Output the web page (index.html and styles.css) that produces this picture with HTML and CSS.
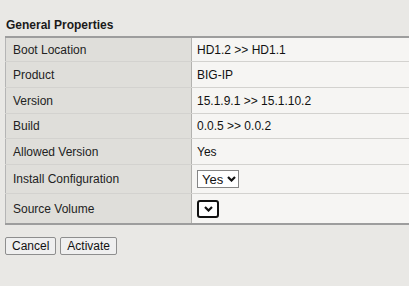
FILE: index.html
```html
<!DOCTYPE html>
<html>
<head>
<meta charset="utf-8">
<link rel="stylesheet" href="styles.css">
</head>
<body>
<div class="page">
  <h2 class="title">General Properties</h2>
  <table class="props">
    <tr class="r first"><td class="lbl">Boot Location</td><td class="val">HD1.2 &gt;&gt; HD1.1</td></tr>
    <tr class="r"><td class="lbl">Product</td><td class="val">BIG-IP</td></tr>
    <tr class="r"><td class="lbl">Version</td><td class="val">15.1.9.1 &gt;&gt; 15.1.10.2</td></tr>
    <tr class="r short"><td class="lbl">Build</td><td class="val">0.0.5 &gt;&gt; 0.0.2</td></tr>
    <tr class="r"><td class="lbl">Allowed Version</td><td class="val">Yes</td></tr>
    <tr class="r tall"><td class="lbl">Install Configuration</td><td class="val"><span class="sel">Yes<svg class="chev" width="9" height="6" viewBox="0 0 9 6"><path d="M1 1 L4.5 4.5 L8 1" fill="none" stroke="#111" stroke-width="2.2"/></svg></span></td></tr>
    <tr class="r tall last"><td class="lbl">Source Volume</td><td class="val"><span class="sel empty"><svg class="chev" width="9" height="6" viewBox="0 0 9 6"><path d="M1 1 L4.5 4.5 L8 1" fill="none" stroke="#111" stroke-width="2.2"/></svg></span></td></tr>
  </table>
  <div class="actions">
    <button class="btn">Cancel</button>
    <button class="btn">Activate</button>
  </div>
</div>
</body>
</html>
```
FILE: styles.css
```css
html, body {
  margin: 0;
  padding: 0;
  overflow: hidden;
  background: #e9e8e5;
}
.page {
  padding: 0 0 0 5px;
  font-family: "Liberation Sans", Arial, sans-serif;
  font-size: 12px;
  color: #1a1a1a;
}
.title {
  font-size: 12px;
  font-weight: bold;
  margin: 0;
  padding: 18px 0 4px 1px;
  line-height: 14px;
}
.props {
  border-collapse: collapse;
  width: 410px;
  border-top: 2px solid #9d9d9d;
  border-left: 1px solid #b5b5b5;
  border-bottom: 2px solid #9d9d9d;
}
.props td {
  border-bottom: 1px solid #d3d2cf;
  padding: 0;
  height: 25px;
  vertical-align: middle;
}
.props .first td { height: 23px; }
.props .short td { height: 24px; }
.props .tall td { height: 28px; }
.props .last td { height: 29px; border-bottom: none; }
.lbl {
  background: #dfdeda;
  width: 178px;
  padding-left: 7px !important;
  border-right: 1px solid #b3b2af;
  color: #222;
}
.val {
  background: #f6f5f3;
  padding-left: 5px !important;
  color: #111;
}
.sel {
  display: inline-flex;
  align-items: center;
  box-sizing: border-box;
  height: 18px;
  width: 42px;
  border: 1px solid #858585;
  background: #fff;
  padding: 0 0 0 4px;
  gap: 4px;
  vertical-align: middle;
  font-size: 13px;
}
.sel.empty {
  width: 22px;
  height: 18px;
  border: 2px solid #111;
  border-radius: 3px;
  padding: 0;
  justify-content: center;
}
.chev { display: block; }
.actions {
  display: flex;
  gap: 4px;
  padding-top: 12px;
}
.btn {
  font-family: "Liberation Sans", Arial, sans-serif;
  font-size: 12px;
  height: 18px;
  padding: 0 6px;
  border: 1px solid #8e8e8e;
  border-radius: 2px;
  background: #efefef;
  color: #111;
  line-height: 14px;
}
```
